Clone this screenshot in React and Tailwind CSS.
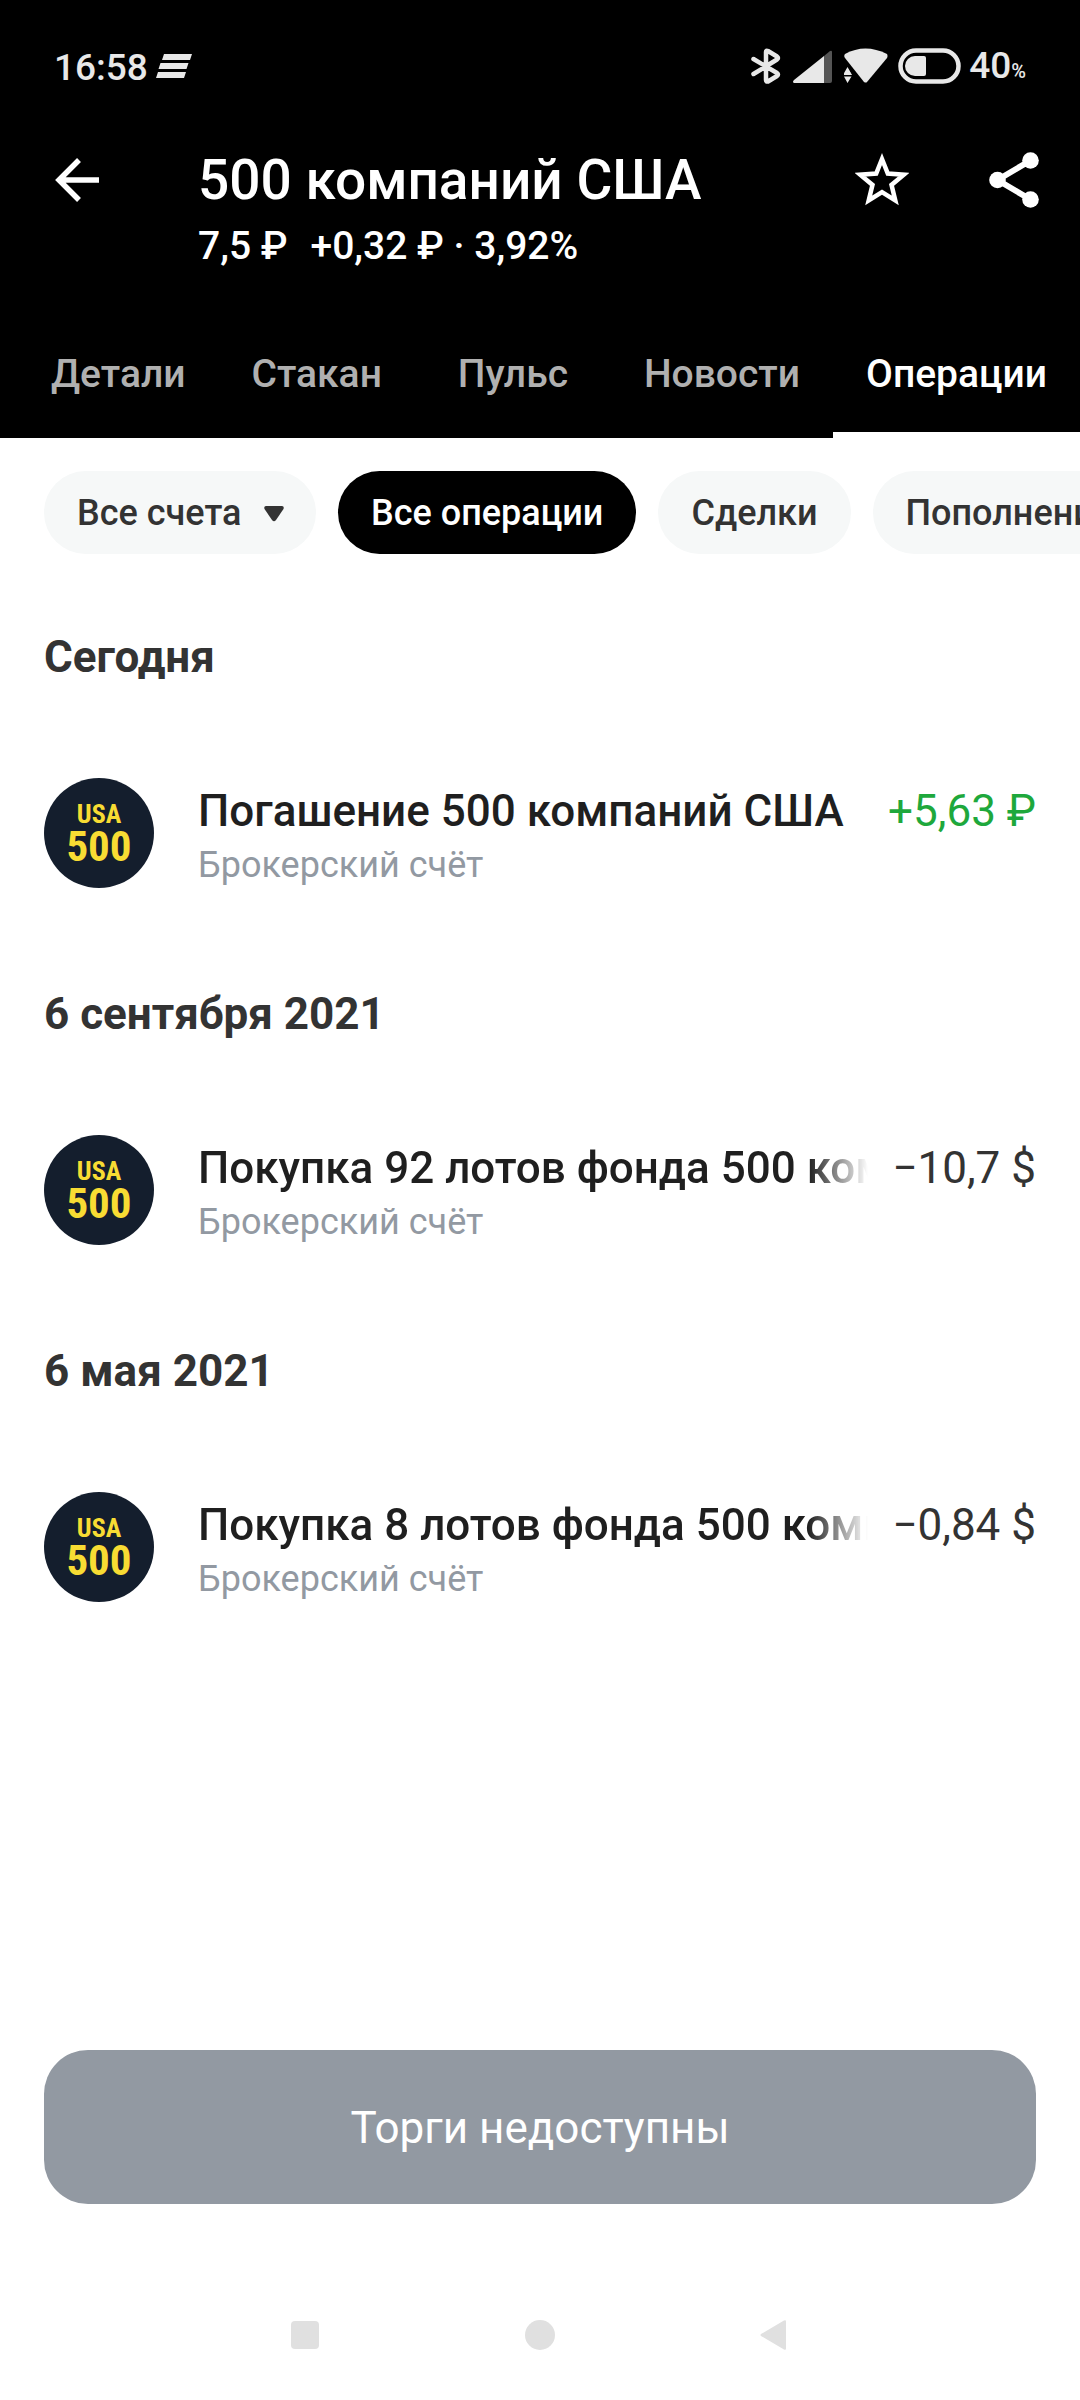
import React, { useState } from 'react';

const tabs = ['Детали', 'Стакан', 'Пульс', 'Новости', 'Операции'];

const filters = ['Все операции', 'Сделки', 'Пополнения'];

const sections = [
  {
    date: 'Сегодня',
    items: [{ title: 'Погашение 500 компаний США', account: 'Брокерский счёт', amount: '+5,63 ₽', income: true }]
  },
  {
    date: '6 сентября 2021',
    items: [{ title: 'Покупка 92 лотов фонда 500 компаний США', account: 'Брокерский счёт', amount: '−10,7 $', long: true }]
  },
  {
    date: '6 мая 2021',
    items: [{ title: 'Покупка 8 лотов фонда 500 компаний США', account: 'Брокерский счёт', amount: '−0,84 $', long: true }]
  }
];

const StatusBar = () => (
  <div className="flex h-[136px] items-center justify-between px-[54px] text-[#e8e8e8]">
    <div className="flex items-center gap-2">
      <span className="text-[37px] font-medium leading-[48px]">16:58</span>
      <svg width="36" height="40" viewBox="0 0 36 40" fill="currentColor" aria-hidden="true">
        <path d="M8 6h28l-2 6H6zM4.500 15h28l-2 6h-28zM2 24h28l-2 6H0z" />
      </svg>
    </div>

    <div className="flex items-center">
      {/* Bluetooth */}
      <svg className="mr-3" width="30" height="40" viewBox="0 0 30 40" fill="none" stroke="currentColor" strokeWidth="4.500" strokeLinecap="round" strokeLinejoin="round" aria-hidden="true">
        <path d="M2.500 11L26 25Q28 26.500 26 28L17 33.500Q15 34 15 32V4Q15 2 17 3L26 8.500Q28 10 26 11.500L2.500 26" />
      </svg>
      {/* Mobile signal */}
      <svg className="mr-3" width="39" height="40" viewBox="0 0 39 40" aria-hidden="true">
        <path d="M31 8L37 3q2-1 2 1v29q0 2-2 2h-6z" fill="#555555" />
        <path d="M31 8v27H1q-2-1 0-3z" fill="currentColor" />
      </svg>
      {/* Wi-Fi with traffic arrows */}
      <svg className="mr-[10px]" width="44" height="40" viewBox="0 0 44 40" fill="currentColor" aria-hidden="true">
        <path d="M1 6Q21-5 43 6Q44 8 43 10L23 34Q22 35 20 34L1 10Q-.5 8 1 6z" />
        <path d="M3.500 19L8 27H-1z" stroke="#000" strokeWidth="2" paintOrder="stroke" />
        <path d="M3.500 20L7.500 26.500H0zM0 28.500h7.500L3.500 35z" />
      </svg>
      {/* Battery */}
      <svg className="mr-2" width="63" height="40" viewBox="0 0 63 40" aria-hidden="true">
        <rect x="2.500" y="2.500" width="58" height="31" rx="15.500" fill="none" stroke="currentColor" strokeWidth="4.500" />
        <path d="M17 8h9q2 0 2 2v16q0 2-2 2h-9a10 10 0 0 1 0-20z" fill="currentColor" />
      </svg>
      <span className="text-[37px] font-medium leading-[48px]">
        40<span className="text-[20px]">%</span>
      </span>
    </div>
  </div>
);

const Header = () => (
  <div className="flex items-start pl-[55px] pr-[41px] pt-3">
    <button type="button" aria-label="Назад" className="mt-[10px] shrink-0">
      <svg width="44" height="44" viewBox="0 0 44 44" fill="none" stroke="currentColor" strokeWidth="5.500" aria-hidden="true">
        <path d="M44 22H4M24 2L4 22l20 20" />
      </svg>
    </button>

    <div className="ml-[99px] min-w-0 flex-1">
      <h1 className="truncate text-[55px] font-medium leading-[64px]">500 компаний США</h1>
      <p className="mt-[10px] flex gap-[23px] text-[39px] font-medium leading-[48px]">
        <span>7,5 ₽</span>
        <span>+0,32 ₽ · 3,92%</span>
      </p>
    </div>

    <button type="button" aria-label="В избранное" className="mt-1 shrink-0">
      <svg width="54" height="54" viewBox="0 0 54 54" fill="none" stroke="currentColor" strokeWidth="4.500" aria-hidden="true">
        <path d="M27 7l5.800 14.500 16 1.200-12.300 10.200L40.300 48.500 27 40.200 13.700 48.500l3.800-15.600L5.200 22.700l16-1.200z" />
      </svg>
    </button>
    <button type="button" aria-label="Поделиться" className="ml-20 mt-1 shrink-0">
      <svg width="50" height="56" viewBox="0 0 50 56" fill="currentColor" aria-hidden="true">
        <path d="M41.500 8.500L8.500 28l33 19.500" fill="none" stroke="currentColor" strokeWidth="6" />
        <circle cx="41.500" cy="8.500" r="8.300" />
        <circle cx="8.500" cy="28" r="8.300" />
        <circle cx="41.500" cy="47.500" r="8.300" />
      </svg>
    </button>
  </div>
);

const FundLogo = () => (
  <div className="flex h-[110px] w-[110px] shrink-0 flex-col items-center justify-center rounded-full bg-[#141e2d] font-['Roboto_Condensed',Roboto,sans-serif] font-bold text-[#f8dc33]">
    <span className="text-[26px] leading-[26px]">USA</span>
    <span className="text-[43px] leading-[38px]">500</span>
  </div>
);

const Operation = ({ title, account, amount, income, long }) => (
  <li className="flex items-start">
    <FundLogo />
    <div className="ml-11 min-w-0 flex-1 pt-[5px]">
      <div className="flex gap-6">
        <p
          className={`min-w-0 flex-1 overflow-hidden whitespace-nowrap text-[44px] font-medium leading-[56px] text-[#1f1f1f] ${
            long ? '[mask-image:linear-gradient(to_left,transparent,black_60px)]' : ''
          }`}
        >
          {title}
        </p>
        <p className={`shrink-0 text-[44px] leading-[56px] ${income ? 'text-[#1ea83c]' : 'text-[#333333]'}`}>{amount}</p>
      </div>
      <p className="text-[36px] leading-[52px] text-[#9299a2]">{account}</p>
    </div>
  </li>
);

const App = () => {
  const [activeTab, setActiveTab] = useState('Операции');
  const [activeFilter, setActiveFilter] = useState('Все операции');

  return (
    <div className="flex min-h-screen flex-col overflow-x-hidden bg-white font-[Roboto,sans-serif]">
      <header className="bg-black text-white">
        <StatusBar />
        <Header />

        {/* Tabs, scrolled to the last one */}
        <nav className="mt-[46px] flex justify-end overflow-hidden">
          {tabs.map((tab) => (
            <button
              key={tab}
              type="button"
              onClick={() => setActiveTab(tab)}
              className={`min-w-[196px] shrink-0 border-b-6 px-[33px] py-[34px] text-[39px] font-medium leading-[48px] ${
                tab === activeTab ? 'border-white text-white' : 'border-transparent text-[#b0b0b0]'
              }`}
            >
              {tab}
            </button>
          ))}
        </nav>
      </header>

      <main>
        {/* Filters */}
        <div className="flex gap-[22px] overflow-hidden pl-11 pt-[33px]">
          <label className="relative shrink-0">
            <span className="sr-only">Счёт</span>
            <select className="h-[83px] appearance-none rounded-full bg-[#f6f8f8] pl-[33px] pr-[74px] text-[36px] font-medium text-[#333333]">
              <option>Все счета</option>
            </select>
            <svg className="pointer-events-none absolute right-8 top-[35px]" width="20" height="16" viewBox="0 0 20 16" fill="#333333" aria-hidden="true">
              <path d="M2 0h16q2.500.5 1.500 3l-7.500 11q-2 2.500-4 0L.5 3Q-.5.500 2 0z" />
            </svg>
          </label>
          {filters.map((filter) => (
            <button
              key={filter}
              type="button"
              aria-pressed={filter === activeFilter}
              onClick={() => setActiveFilter(filter)}
              className={`h-[83px] shrink-0 rounded-full px-[33px] text-[36px] font-medium ${
                filter === activeFilter ? 'bg-black text-white' : 'bg-[#f6f8f8] text-[#333333]'
              }`}
            >
              {filter}
            </button>
          ))}
        </div>

        {/* Operations grouped by date */}
        <div className="flex flex-col gap-[95px] px-11 pt-[75px]">
          {sections.map((section) => (
            <section key={section.date}>
              <h2 className="text-[44px] font-bold leading-[56px] text-[#333333]">{section.date}</h2>
              <ul className="mt-[93px]">
                {section.items.map((item) => (
                  <Operation key={item.title} {...item} />
                ))}
              </ul>
            </section>
          ))}
        </div>
      </main>

      <footer className="mt-auto px-11 pt-11">
        <button type="button" disabled className="w-full rounded-[44px] bg-[#9299a2] pb-12 pt-[50px] text-[44px] leading-[56px] text-white">
          Торги недоступны
        </button>

        {/* System navigation */}
        <div className="flex items-center justify-center gap-[205px] pb-[49px] pt-[115px] text-[#e0e0e0]">
          <button type="button" aria-label="Недавние">
            <svg width="30" height="32" viewBox="0 0 30 32" fill="currentColor" aria-hidden="true">
              <rect x="1" y="2" width="28" height="28" rx="4" />
            </svg>
          </button>
          <button type="button" aria-label="Домой">
            <svg width="30" height="32" viewBox="0 0 30 32" fill="currentColor" aria-hidden="true">
              <circle cx="15" cy="16" r="15" />
            </svg>
          </button>
          <button type="button" aria-label="Назад">
            <svg width="30" height="32" viewBox="0 0 30 32" fill="currentColor" aria-hidden="true">
              <path d="M1 15L24 1.500q2-1 2 1v27q0 2-2 1L1 17q-1-1 0-2z" />
            </svg>
          </button>
        </div>
      </footer>
    </div>
  );
};

export default App;
